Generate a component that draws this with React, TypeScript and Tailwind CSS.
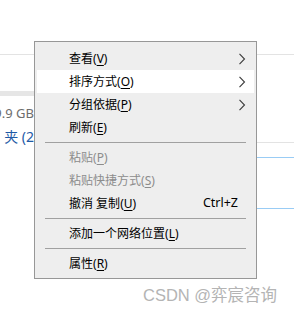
import React from "react";

type Item =
  | { kind: "sep" }
  | {
      kind: "item";
      label: string;
      key: string;
      shortcut?: string;
      arrow?: boolean;
      disabled?: boolean;
      active?: boolean;
    };

const items: Item[] = [
  { kind: "item", label: "查看", key: "V", arrow: true },
  { kind: "item", label: "排序方式", key: "O", arrow: true, active: true },
  { kind: "item", label: "分组依据", key: "P", arrow: true },
  { kind: "item", label: "刷新", key: "E" },
  { kind: "sep" },
  { kind: "item", label: "粘贴", key: "P", disabled: true },
  { kind: "item", label: "粘贴快捷方式", key: "S", disabled: true },
  { kind: "item", label: "撤消 复制", key: "U", shortcut: "Ctrl+Z" },
  { kind: "sep" },
  { kind: "item", label: "添加一个网络位置", key: "L" },
  { kind: "sep" },
  { kind: "item", label: "属性", key: "R" },
];

function Chevron() {
  return (
    <svg width="8" height="12" viewBox="0 0 8 12" className="shrink-0">
      <path d="M1.5 0.8 L6.5 6 L1.5 11.2" fill="none" stroke="#3b3b3b" strokeWidth="1.1" />
    </svg>
  );
}

function MenuRow({ item }: { item: Extract<Item, { kind: "item" }> }) {
  return (
    <div
      className={`flex h-[23px] items-center pl-[32px] pr-[8px] ${
        item.active ? "bg-white" : ""
      } ${item.disabled ? "text-[#8c8c8c]" : "text-[#000]"}`}
    >
      <span className="flex-1 whitespace-nowrap">
        {item.label}(<u className="underline-offset-2">{item.key}</u>)
      </span>
      {item.shortcut && <span className="mr-[8px] text-[12.5px]">{item.shortcut}</span>}
      {item.arrow && <Chevron />}
    </div>
  );
}

export default function App() {
  return (
    <div
      className="relative h-[315px] w-[294px] overflow-hidden bg-white text-[12px] leading-none"
      style={{ fontFamily: "'Noto Sans', 'Noto Sans CJK SC', sans-serif" }}
    >
      {/* explorer window behind the menu */}
      <div className="grid h-full grid-cols-[34px_1fr_38px]">
        <div className="flex flex-col overflow-hidden pt-[54px]">
          <div className="h-px bg-[#e3e3e3]" />
          <div className="mt-[36px] h-[5px] bg-[#e6e6e6]" />
          <div className="mt-[11px] flex justify-end whitespace-nowrap text-[13px] text-[#6d6d6d]">
            9.9 GB
          </div>
          <div className="mt-[10px] flex justify-end whitespace-nowrap text-[14px] text-[#1e5aa6]">
            夹 (2
          </div>
        </div>
        <div />
        <div className="flex flex-col pt-[54px]">
          <div className="h-px bg-[#e3e3e3]" />
          <div className="mt-[87px] h-px bg-[#e3e3e3]" />
          <div className="mt-[14px] h-px bg-[#99ccf5]" />
          <div className="mt-[50px] h-px bg-[#99ccf5]" />
        </div>
      </div>

      {/* context menu */}
      <div className="absolute left-[34px] top-[41px] w-[223px] border border-[#979797] bg-[#eeeeee] px-[2px] pb-[3px] pt-[5px]">
        {items.map((it, i) =>
          it.kind === "sep" ? (
            <div key={i} className="flex h-[7px] items-center px-[8px]">
              <div className="h-px w-full bg-[#a0a0a0]" />
            </div>
          ) : (
            <MenuRow key={i} item={it} />
          )
        )}
      </div>

      {/* watermark */}
      <div
        className="absolute left-[143px] top-[287px] whitespace-nowrap text-[16.5px] text-[#b4b4b4]"
        style={{ fontFamily: "'Liberation Sans', 'Noto Sans CJK SC', sans-serif" }}
      >
        CSDN @弈宸咨询
      </div>
    </div>
  );
}
